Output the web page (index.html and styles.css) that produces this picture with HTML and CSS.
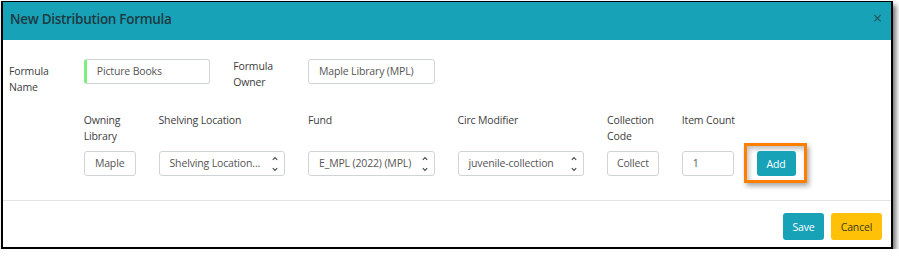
FILE: index.html
```html
<!DOCTYPE html>
<html>
<head>
<meta charset="utf-8">
<link rel="stylesheet" href="styles.css">
</head>
<body>
<div class="frame">
  <div class="header">
    <div class="title">New Distribution Formula</div>
    <div class="close">&times;</div>
  </div>
  <div class="content">
    <div class="grid row1">
      <div class="lbl lbl-name c1">Formula<br>Name</div>
      <div class="c2 s2 pr"><div class="input valid">Picture Books</div></div>
      <div class="lbl lbl-owner c4">Formula<br>Owner</div>
      <div class="c5 s2 pr"><div class="input">Maple Library (MPL)</div></div>
    </div>
    <div class="grid row2">
      <div class="cell c2 pr"><div class="lbl">Owning<br>Library</div><div class="input center">Maple</div></div>
      <div class="cell c3 s2 pr"><div class="lbl">Shelving Location</div><div class="input select"><span>Shelving Location...</span><svg class="arrows" width="6" height="16" viewBox="0 0 6 16"><path d="M0.8 3.8 L3 1.6 L5.2 3.8 M0.8 12.2 L3 14.4 L5.2 12.2" fill="none" stroke="#444" stroke-width="1.1"/></svg></div></div>
      <div class="cell c5 s2 pr"><div class="lbl">Fund</div><div class="input select"><span>E_MPL (2022) (MPL)</span><svg class="arrows" width="6" height="16" viewBox="0 0 6 16"><path d="M0.8 3.8 L3 1.6 L5.2 3.8 M0.8 12.2 L3 14.4 L5.2 12.2" fill="none" stroke="#444" stroke-width="1.1"/></svg></div></div>
      <div class="cell c7 s2 pr"><div class="lbl">Circ Modifier</div><div class="input select"><span>juvenile-collection</span><svg class="arrows" width="6" height="16" viewBox="0 0 6 16"><path d="M0.8 3.8 L3 1.6 L5.2 3.8 M0.8 12.2 L3 14.4 L5.2 12.2" fill="none" stroke="#444" stroke-width="1.1"/></svg></div></div>
      <div class="cell c9 pr"><div class="lbl">Collection<br>Code</div><div class="input center">Collect</div></div>
      <div class="cell c10 pr"><div class="lbl nowrap">Item Count</div><div class="input">1</div></div>
      <div class="cell c11"><div class="lbl"></div><div class="addwrap"><button class="btn btn-info add">Add</button><div class="highlight"></div></div></div>
    </div>
  </div>
  <div class="footer">
    <button class="btn btn-info">Save</button>
    <button class="btn btn-warning">Cancel</button>
  </div>
</div>
</body>
</html>
```
FILE: styles.css
```css
html, body {
  margin: 0;
  padding: 0;
  background: #fff;
}
body {
  font-family: "Open Sans", "Noto Sans", sans-serif;
  font-size: 10.5px;
  letter-spacing: -0.15px;
  color: #3a3a3a;
}
.frame {
  box-sizing: border-box;
  margin: 1px 0 0 1px;
  width: 892px;
  height: 248px;
  border: 2px solid #000;
  border-top-width: 1px;
  box-shadow: 3px 4px 5px rgba(0,0,0,0.55);
  background: #fff;
  display: flex;
  flex-direction: column;
}
.header {
  height: 38px;
  background: #18a2b8;
  display: flex;
  justify-content: space-between;
  align-items: flex-start;
  padding: 0 9px 0 7px;
  box-sizing: border-box;
}
.title {
  font-size: 13.5px;
  letter-spacing: -0.3px;
  font-weight: 600;
  color: #1e3a42;
  line-height: 20px;
  margin-top: 7px;
}
.close {
  font-size: 16px;
  line-height: 20px;
  margin-top: 6px;
  color: #24525c;
}
.content {
  padding: 0 0 0 6px;
  height: 160px;
  border-bottom: 1px solid #e3e3e3;
}
.grid {
  display: grid;
  grid-template-columns: repeat(12, 74.75px);
}
.row1 {
  margin-top: 19px;
  align-items: start;
}
.row2 {
  margin-top: 17px;
  align-items: end;
}
.c1 { grid-column-start: 1; }
.c2 { grid-column-start: 2; }
.c3 { grid-column-start: 3; }
.c4 { grid-column-start: 4; }
.c5 { grid-column-start: 5; }
.c7 { grid-column-start: 7; }
.c9 { grid-column-start: 9; }
.c10 { grid-column-start: 10; }
.c11 { grid-column-start: 11; }
.s2 { grid-column-end: span 2; }
.pr { padding-right: 23px; }
.row1 > * { grid-row: 1; }
.row2 > * { grid-row: 1; }
.lbl {
  line-height: 16px;
  color: #3d3d3d;
}
.nowrap { white-space: nowrap; }
.lbl-name { margin-top: 4px; }
.lbl-owner { margin-top: -1px; }
.cell .lbl {
  height: 32px;
  margin-bottom: 7px;
}
.input {
  box-sizing: border-box;
  height: 25px;
  border: 1px solid #cfd4d8;
  border-radius: 3px;
  padding: 0 10px;
  line-height: 23px;
  color: #555;
  white-space: nowrap;
  overflow: hidden;
  background: #fff;
}
.input.center { text-align: center; padding: 0 4px; }
.input.valid {
  border-left: 3px solid #7af07f;
  padding-left: 10px;
}
.select {
  display: flex;
  justify-content: space-between;
  align-items: center;
  padding: 0 6px 0 10px;
}
.arrows { flex: none; }
.addwrap {
  position: relative;
  width: 39px;
  height: 25px;
}
.btn {
  font-family: "Open Sans", "Noto Sans", sans-serif;
  font-size: 10.5px;
  letter-spacing: -0.15px;
  border: none;
  border-radius: 3px;
  height: 26px;
  padding: 0 8px;
  cursor: pointer;
}
.btn-info { background: #18a2b8; color: #fff; }
.btn-warning { background: #ffc107; color: #3a3a1a; }
.add {
  width: 39px;
  height: 25px;
  padding: 0;
  position: relative;
  z-index: 1;
}
.highlight {
  position: absolute;
  left: -13px;
  top: -8px;
  width: 63px;
  height: 40px;
  box-sizing: border-box;
  border: 3px solid #ff8000;
  box-shadow: 2px 3px 5px rgba(0,0,0,0.35), inset 2px 3px 5px rgba(0,0,0,0.25);
}
.footer {
  display: flex;
  justify-content: flex-end;
  gap: 7px;
  padding: 12px 9px 0 0;
}
.footer .btn { height: 27px; }
.footer .btn-info { width: 41px; padding: 0; }
.footer .btn-warning { width: 51px; padding: 0; }
```
